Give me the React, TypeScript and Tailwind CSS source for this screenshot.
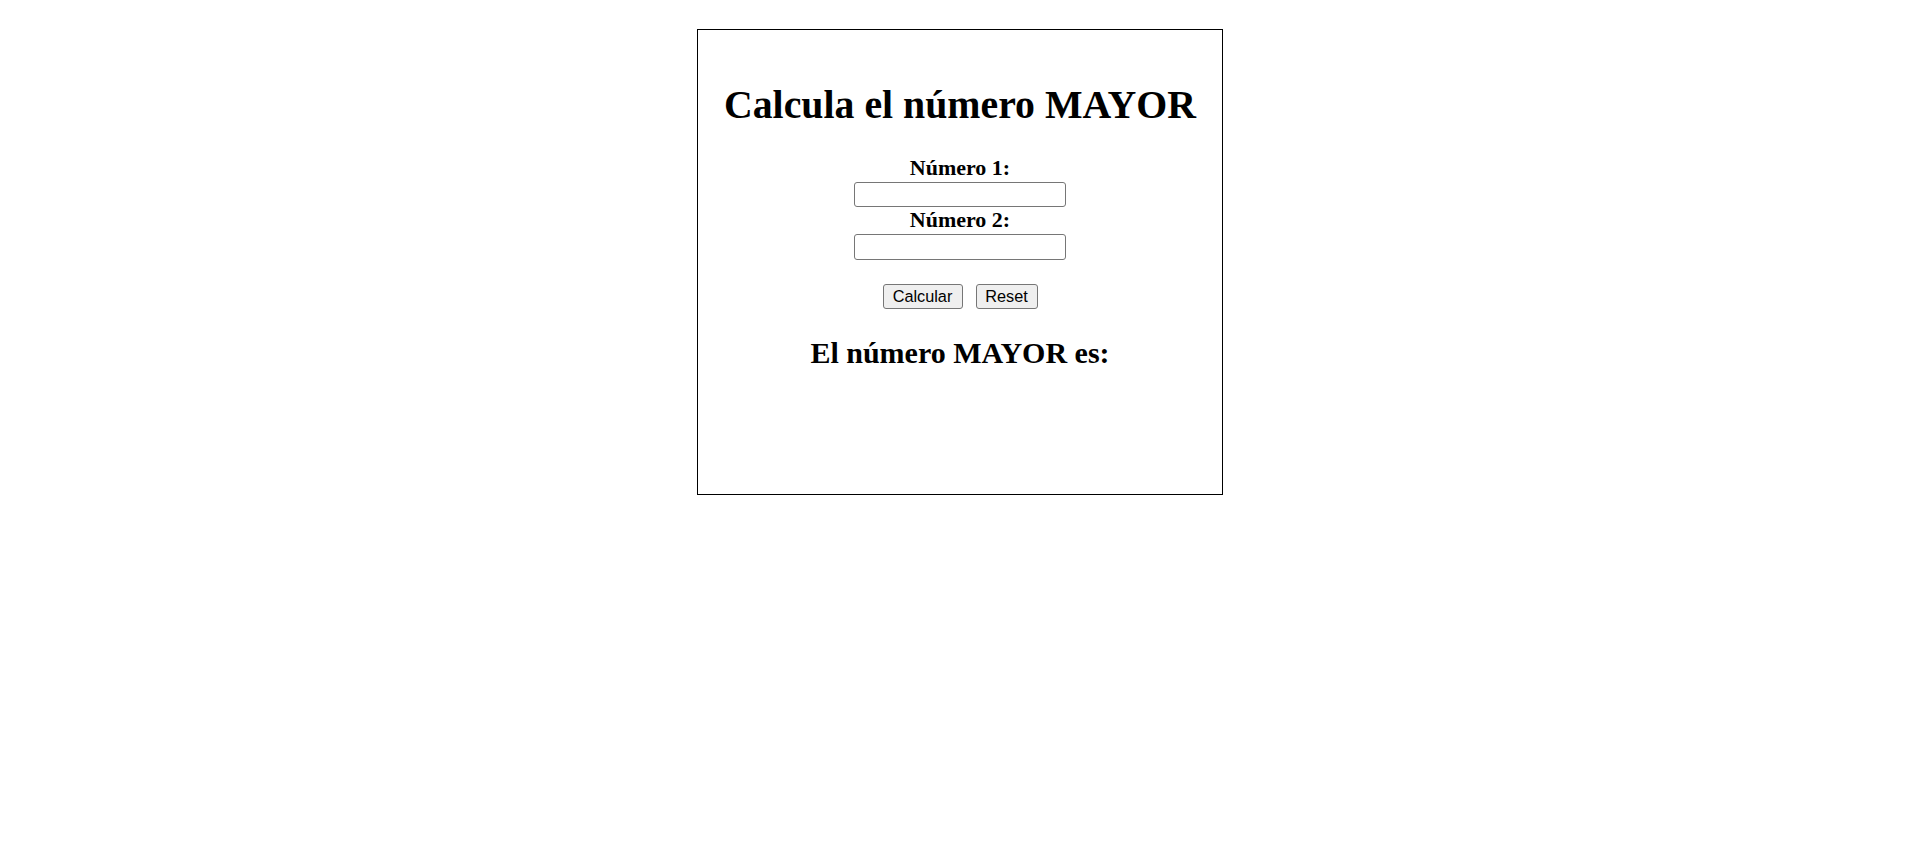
import React, { useState } from "react";

export default function App() {
  const [a, setA] = useState("");
  const [b, setB] = useState("");
  const [result, setResult] = useState("");

  const calcular = () => {
    const x = parseFloat(a);
    const y = parseFloat(b);
    if (isNaN(x) || isNaN(y)) return;
    setResult(String(Math.max(x, y)));
  };

  const reset = () => {
    setA("");
    setB("");
    setResult("");
  };

  return (
    <div className="min-h-screen bg-white flex justify-center pt-[29px] text-black font-['Liberation_Serif','Times_New_Roman',serif]">
      <div className="w-[526px] h-[466px] border border-black flex flex-col items-center">
        <h1 className="mt-[56px] text-[39.8px] leading-none font-bold">Calcula el número MAYOR</h1>

        <label className="mt-[31px] text-[22px] leading-none font-bold">Número 1:</label>
        <input
          type="text"
          value={a}
          onChange={(e) => setA(e.target.value)}
          className="mt-[3px] w-[212px] h-[25px] border border-[#767676] rounded-[3px] px-1 text-[16px] font-['Liberation_Sans',Arial,sans-serif] outline-none"
        />

        <label className="mt-[2px] text-[22px] leading-none font-bold">Número 2:</label>
        <input
          type="text"
          value={b}
          onChange={(e) => setB(e.target.value)}
          className="mt-[3px] w-[212px] h-[26px] border border-[#767676] rounded-[3px] px-1 text-[16px] font-['Liberation_Sans',Arial,sans-serif] outline-none"
        />

        <div className="mt-[24px] flex gap-[13px] font-['Liberation_Sans',Arial,sans-serif] text-[16.3px]">
          <button
            onClick={calcular}
            className="w-[80px] h-[25px] bg-[#efefef] border border-[#767676] rounded-[3px] leading-none"
          >
            Calcular
          </button>
          <button
            onClick={reset}
            className="w-[62px] h-[25px] bg-[#efefef] border border-[#767676] rounded-[3px] leading-none"
          >
            Reset
          </button>
        </div>

        <h2 className="mt-[29px] text-[30px] leading-none font-bold">El número MAYOR es: {result}</h2>
      </div>
    </div>
  );
}
